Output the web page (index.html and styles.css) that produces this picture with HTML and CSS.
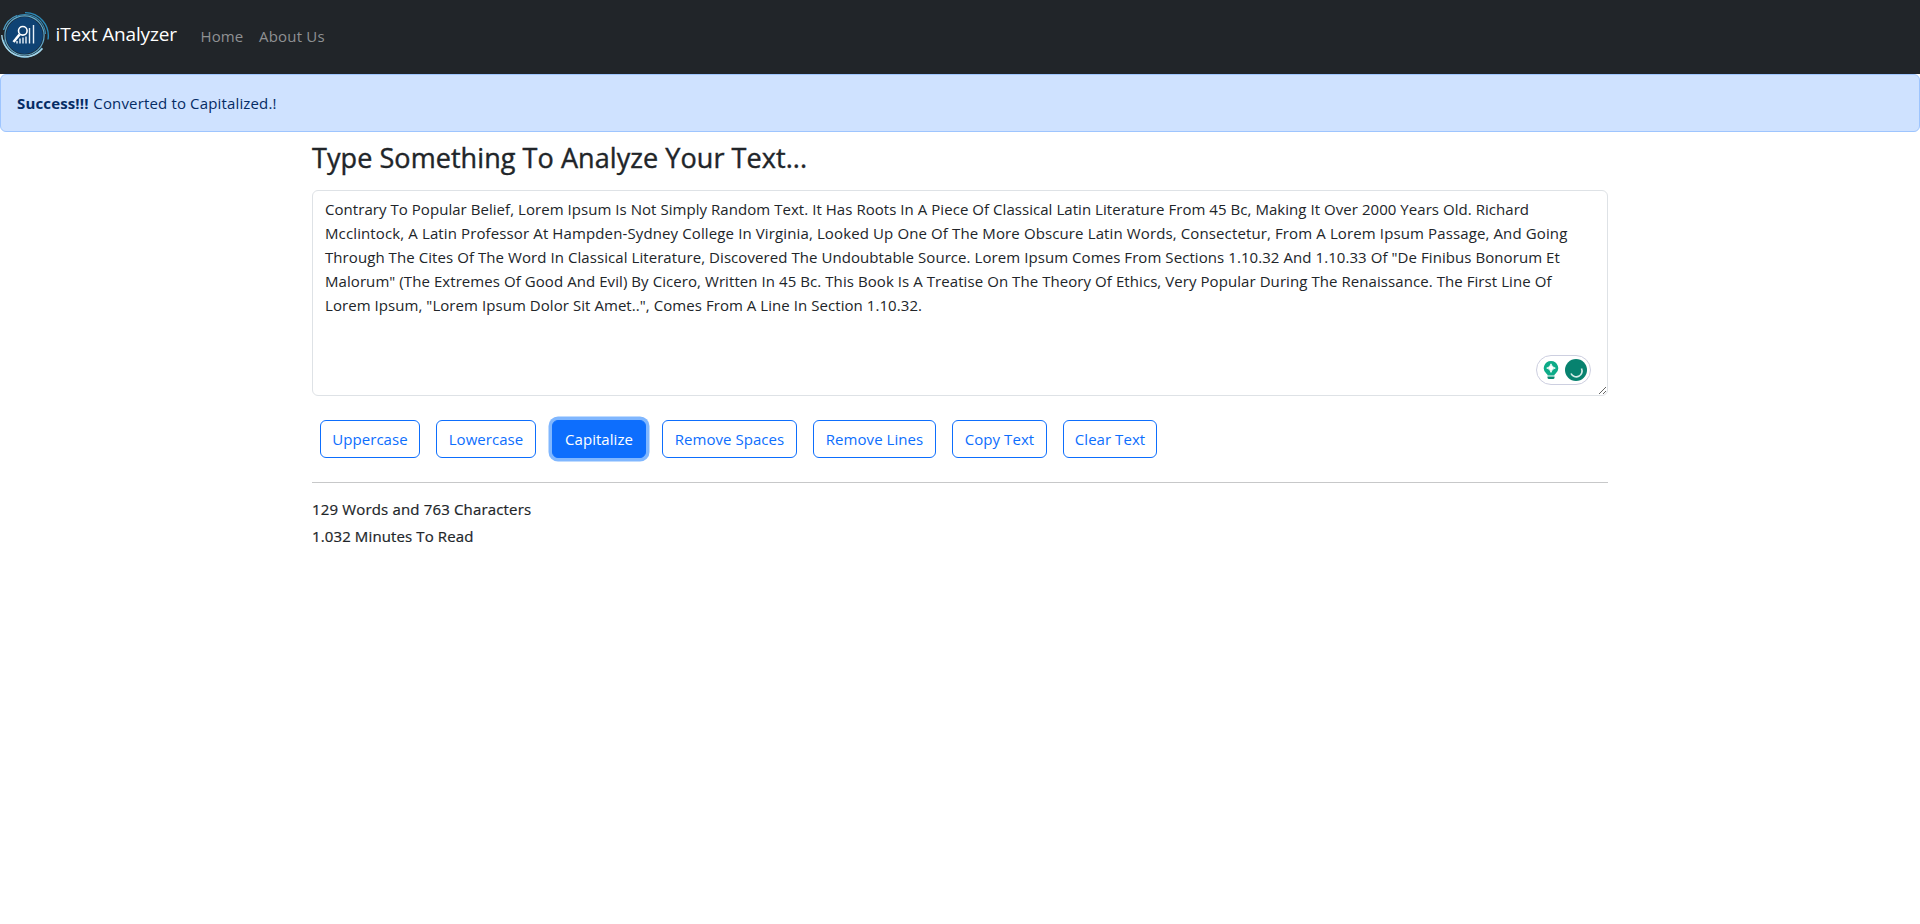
FILE: index.html
```
<!DOCTYPE html>
<html lang="en">
<head>
<meta charset="utf-8">
<title>iText Analyzer</title>
<link rel="stylesheet" href="styles.css">
</head>
<body>
<nav class="navbar">
  <a class="brand">
    <svg class="logo" viewBox="0 0 50 50" fill="none">
      <circle cx="24.500" cy="24.500" r="18.400" fill="#0f4374"/>
      <circle cx="24.500" cy="24.500" r="19.600" stroke="#63a9cb" stroke-width="1.200"/>
      <path d="M42 37A21.500 21.500 0 0 1 3.500 29M3.500 19A22 22 0 0 1 17 4.500" stroke="#4b9ac2" stroke-width="1.300"/>
      <path d="M42.500 37.500A23 23 0 0 1 1.800 24" stroke="#a5d5e8" stroke-width="1.400"/>
      <path d="M16 5.500A21 21 0 0 1 41 11Q45 16 45.500 23" stroke="#3388b4" stroke-width="1.200"/>
      <path d="M25 1.600A23.200 23.200 0 0 1 48 28.500" stroke="#2c8bb9" stroke-width="1.400"/>
      <circle cx="22.800" cy="19.800" r="4.300" stroke="#fff" stroke-width="1.600"/>
      <path d="M19.500 23.500l-6 7.500" stroke="#fff" stroke-width="2.600"/>
      <path d="M17 32.500v-2.500M20 32.500v-5M23 32.500v-6M26 32.500v-7M29.500 32.500V17M33.500 32.500V14" stroke="#e8f1f8" stroke-width="1.400"/>
    </svg>
    <span class="brand-name">iText Analyzer</span>
  </a>
  <a class="nav-link home">Home</a>
  <a class="nav-link about">About Us</a>
</nav>
<div class="alert"><strong>Success!!!</strong> <span class="message">Converted to Capitalized.!</span></div>
<main class="container">
  <h1 class="title">Type Something To Analyze Your Text...</h1>
  <div class="editor-wrap">
    <div class="editor">
      <span class="line l1">Contrary To Popular Belief, Lorem Ipsum Is Not Simply Random Text. It Has Roots In A Piece Of Classical Latin Literature From 45 Bc, Making It Over 2000 Years Old. Richard</span>
      <span class="line l2">Mcclintock, A Latin Professor At Hampden-Sydney College In Virginia, Looked Up One Of The More Obscure Latin Words, Consectetur, From A Lorem Ipsum Passage, And Going</span>
      <span class="line l3">Through The Cites Of The Word In Classical Literature, Discovered The Undoubtable Source. Lorem Ipsum Comes From Sections 1.10.32 And 1.10.33 Of "De Finibus Bonorum Et</span>
      <span class="line l4">Malorum" (The Extremes Of Good And Evil) By Cicero, Written In 45 Bc. This Book Is A Treatise On The Theory Of Ethics, Very Popular During The Renaissance. The First Line Of</span>
      <span class="line l5">Lorem Ipsum, "Lorem Ipsum Dolor Sit Amet..", Comes From A Line In Section 1.10.32.</span>
    </div>
    <div class="assistant">
      <svg class="bulb" viewBox="0 0 16 20">
        <path d="M8 1a7.200 7.200 0 0 0-4.500 12.800Q4.500 14.600 4.700 15.500h6.600q.2-.9 1.200-1.700A7.200 7.200 0 0 0 8 1z" fill="#0dab88"/>
        <path d="M8 3.800q.8 3.500 4.300 4.300-3.500.8-4.300 4.300-.8-3.500-4.300-4.300 3.500-.8 4.300-4.300z" fill="#fff" stroke="#fff" stroke-width=".8"/>
        <path d="M4.500 16.500h7v1q0 1.500-1.500 1.500H6q-1.500 0-1.500-1.500z" fill="#078a70"/>
      </svg>
      <svg class="spinner" viewBox="0 0 22 22">
        <circle cx="11" cy="11" r="11" fill="#07826f"/>
        <path d="M16.500 9.500A5.800 5.800 0 0 1 6 14.500" fill="none" stroke="#d5ece8" stroke-width="1.700"/>
      </svg>
    </div>
  </div>
  <div class="buttons">
    <button class="btn b1">Uppercase</button>
    <button class="btn b2">Lowercase</button>
    <button class="btn b3 active">Capitalize</button>
    <button class="btn b4">Remove Spaces</button>
    <button class="btn b5">Remove Lines</button>
    <button class="btn b6">Copy Text</button>
    <button class="btn b7">Clear Text</button>
  </div>
  <hr class="rule">
  <p class="stat s1">129 Words and 763 Characters</p>
  <p class="stat s2">1.032 Minutes To Read</p>
</main>
</body>
</html>
```
FILE: styles.css
```
* { box-sizing: border-box; }
body { margin: 0; background: #fff; color: #212529; font: 400 15px/24px "Open Sans", "Noto Sans", sans-serif; }
.navbar { display: flex; height: 74px; background: #212529; align-items: flex-start; }
.brand { display: flex; width: 200.500px; color: #fff; }
.logo { width: 50px; height: 50px; margin-top: 11px; }
.brand-name { margin: 19px 0 0 5.500px; font-size: 19px; line-height: 30px; letter-spacing: -.15px; white-space: nowrap; }
.nav-link { margin-top: 24px; color: #8f9193; white-space: nowrap; }
.home { width: 58.500px; letter-spacing: .1px; }
.about { letter-spacing: .2px; }
.alert { height: 58px; padding: 16px; border: 1px solid #9ec5fe; border-radius: 6px; background: #cfe2ff; color: #052c65; letter-spacing: .15px; }
.alert strong { margin-right: .6px; }
.container { width: 1296px; margin: 0 auto; }
.title { margin: 9px 0 15px; font-size: 27px; line-height: 34px; font-weight: 500; letter-spacing: .07px; -webkit-text-stroke: .4px currentColor; white-space: nowrap; }
.editor-wrap { position: relative; }
.editor { height: 206px; padding: 6px 12px; border: 1px solid #dee2e6; border-radius: 6px; overflow: hidden; resize: vertical; }
.line { display: block; width: max-content; white-space: nowrap; }
.l1 { letter-spacing: .048px; }
.l2 { letter-spacing: .122px; }
.l3, .l4 { letter-spacing: .07px; }
.l5 { letter-spacing: .06px; }
.assistant { position: absolute; right: 17px; bottom: 11px; display: flex; align-items: center; gap: 6px; width: 55px; height: 30px; padding-left: 6px; border: 1px solid #cdcfe0; border-radius: 15px; background: #fff; }
.bulb { width: 16px; height: 20px; }
.spinner { width: 22px; height: 22px; }
.buttons { display: flex; margin: 24px 8px; gap: 16px; }
.btn { flex: none; height: 38px; padding: 0; border: 1px solid #0d6efd; border-radius: 6px; background: #fff; color: #0d6efd; font: inherit; letter-spacing: .05px; white-space: nowrap; }
.b1, .b2 { width: 100px; }
.b3 { width: 94px; }
.b4 { width: 135px; }
.b5 { width: 123px; }
.b6 { width: 95px; }
.b7 { width: 94px; }
.active { background: #0d6efd; color: #fff; box-shadow: 0 0 0 3.500px #80b7ff; }
.rule { height: 1px; margin: 0 0 17px; border: 0; background: #c7c8c9; }
.stat { width: max-content; margin: 0 0 8px; line-height: 19px; font-weight: 500; -webkit-text-stroke: .2px currentColor; }
.s1 { letter-spacing: .16px; }
.s2 { letter-spacing: .12px; }
```
